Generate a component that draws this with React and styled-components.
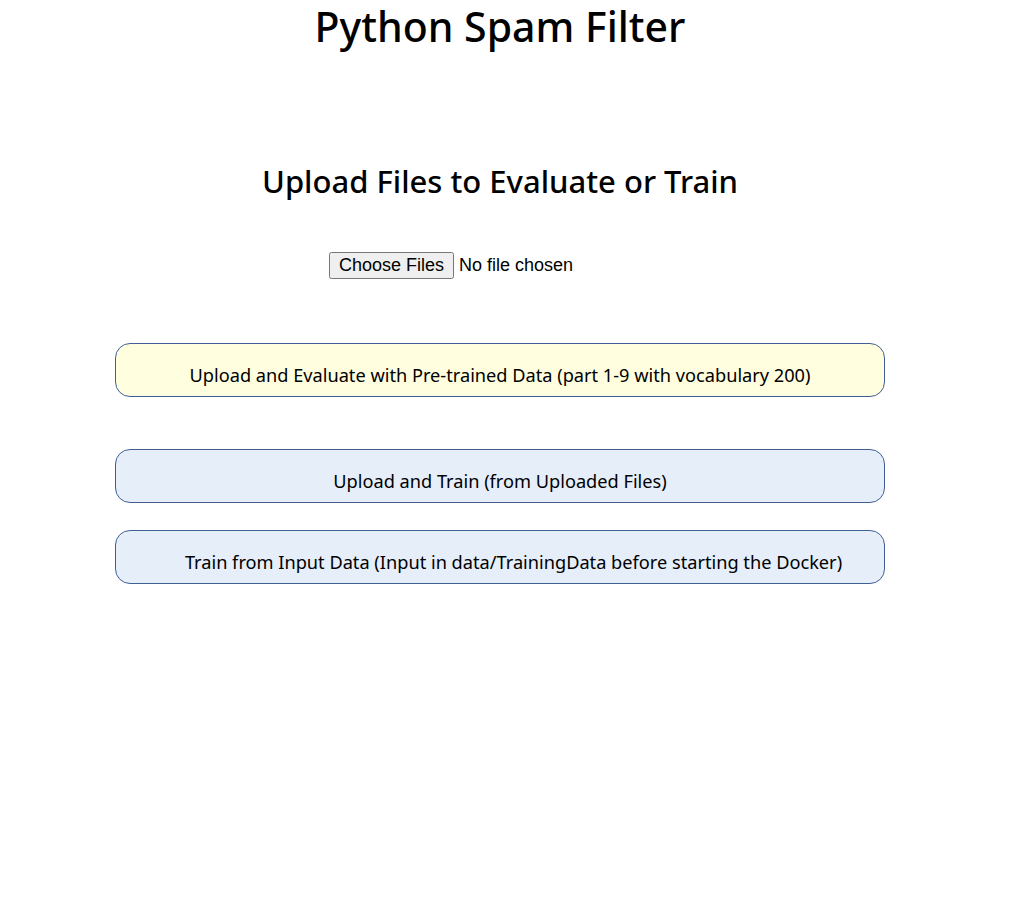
import React from "react";
import styled, { createGlobalStyle } from "styled-components";

const GlobalStyle = createGlobalStyle`
    html, body {
        margin: 0;
        padding: 0;
        background: #ffffff;
    }
    body {
        font-family: "Noto Sans", "Open Sans", sans-serif;
        color: #000000;
    }
`;

export default function App() {
    return (
        <Page>
            <GlobalStyle />
            <Title>Python Spam Filter</Title>
            <Section>
                <Heading>Upload Files to Evaluate or Train</Heading>
                <Form onSubmit={(e) => e.preventDefault()}>
                    <FileRow>
                        <FileInput type="file" multiple />
                    </FileRow>
                    <ActionButton variant="evaluate" gap={64}>
                        Upload and Evaluate with Pre-trained Data (part 1-9
                        with vocabulary 200)
                    </ActionButton>
                    <ActionButton gap={52}>
                        Upload and Train (from Uploaded Files)
                    </ActionButton>
                    <ActionButton gap={27} shift={27}>
                        Train from Input Data (Input in data/TrainingData
                        before starting the Docker)
                    </ActionButton>
                </Form>
            </Section>
        </Page>
    );
}

const Page = styled.div`
    width: 1000px;
    display: flex;
    flex-direction: column;
    align-items: center;
`;

const Title = styled.h1`
    margin: 0;
    font-size: 41px;
    line-height: 52px;
    font-weight: 500;
    text-align: center;
`;

const Section = styled.section`
    margin-top: 111px;
    width: 100%;
    display: flex;
    flex-direction: column;
    align-items: center;
`;

const Heading = styled.h2`
    margin: 0;
    font-size: 31px;
    line-height: 36px;
    font-weight: 500;
    text-align: center;
`;

const Form = styled.form`
    margin-top: 53px;
    width: 100%;
    display: flex;
    flex-direction: column;
    align-items: center;
`;

const FileRow = styled.div`
    display: flex;
    justify-content: center;
    width: 100%;
`;

const FileInput = styled.input`
    width: 342px;
    font-family: "Liberation Sans", Arial, sans-serif;
    font-size: 18px;
    color: #000;

    &::file-selector-button {
        font: inherit;
        padding: 1px 8px;
        margin-right: 5px;
    }
`;

const ActionButton = styled.button`
    margin-top: ${(props) => props.gap}px;
    width: 770px;
    height: 54px;
    box-sizing: border-box;
    padding: 21px 0 11px ${(props) => props.shift || 0}px;
    border: 1px solid #3f5f95;
    border-radius: 15px;
    background-color: ${(props) =>
        props.variant === "evaluate" ? "#ffffe0" : "#e6eefa"};
    font-family: "Noto Sans", "Open Sans", sans-serif;
    font-size: 18.2px;
    line-height: 20px;
    color: #000;
    text-align: center;
    cursor: pointer;
`;
